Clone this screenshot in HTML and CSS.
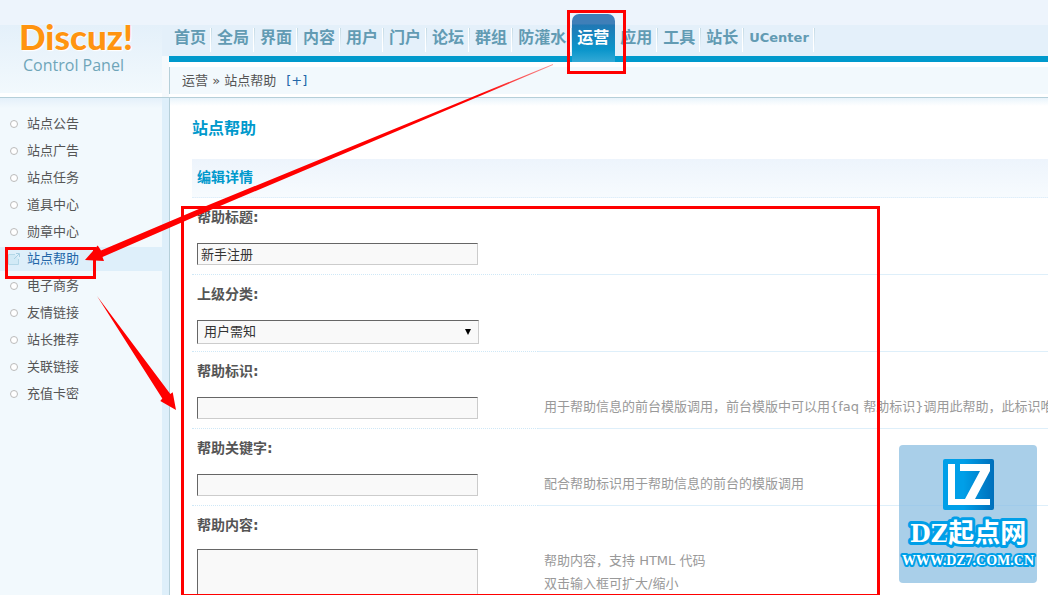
FILE: index.html
```html
<!DOCTYPE html>
<html lang="zh-CN">
<head>
  <meta charset="UTF-8">
  <meta name="viewport" content="width=device-width, initial-scale=1.0">
  <title>Discuz! Control Panel</title>
  <link rel="stylesheet" href="styles.css">
</head>
<body>
  <header class="header">
    <div class="logo">
      <div class="logo-name">Discuz!</div>
      <div class="logo-sub">Control Panel</div>
    </div>
    <div class="header-main">
      <nav class="nav">
        <a href="#">首页</a>
        <a href="#">全局</a>
        <a href="#">界面</a>
        <a href="#">内容</a>
        <a href="#">用户</a>
        <a href="#">门户</a>
        <a href="#">论坛</a>
        <a href="#">群组</a>
        <a href="#">防灌水</a>
        <a href="#" class="active">运营</a>
        <a href="#">应用</a>
        <a href="#">工具</a>
        <a href="#">站长</a>
        <a href="#" class="latin">UCenter</a>
      </nav>
      <div class="crumbs">
        <span>运营 » 站点帮助</span>
        <a href="#">[+]</a>
      </div>
    </div>
  </header>

  <div class="layout">
    <aside class="sidebar">
      <ul class="menu">
        <li><a href="#">站点公告</a></li>
        <li><a href="#">站点广告</a></li>
        <li><a href="#">站点任务</a></li>
        <li><a href="#">道具中心</a></li>
        <li><a href="#">勋章中心</a></li>
        <li class="active">
          <a href="#">
            <svg class="menu-icon" width="12" height="12" viewBox="0 0 12 12">
              <path d="M7 1.5H.5v10h10V6" fill="#d2eaf6" stroke="#b4d8e8"/>
              <path d="M8 .5h3.500V4M11 1L6 6" fill="none" stroke="#a9d0e3"/>
            </svg>站点帮助</a>
        </li>
        <li><a href="#">电子商务</a></li>
        <li><a href="#">友情链接</a></li>
        <li><a href="#">站长推荐</a></li>
        <li><a href="#">关联链接</a></li>
        <li><a href="#">充值卡密</a></li>
      </ul>
    </aside>

    <main class="content">
      <h1>站点帮助</h1>
      <form class="help-form">
        <h2>编辑详情</h2>
        <div class="row">
          <label for="helpTitle">帮助标题:</label>
          <div class="field"><input type="text" id="helpTitle" value="新手注册"></div>
          <p class="tip"></p>
        </div>
        <div class="row">
          <label for="helpParent">上级分类:</label>
          <div class="field select-wrap">
            <select id="helpParent">
              <option>用户需知</option>
            </select>
          </div>
          <p class="tip"></p>
        </div>
        <div class="row">
          <label for="helpId">帮助标识:</label>
          <div class="field"><input type="text" id="helpId"></div>
          <p class="tip">用于帮助信息的前台模版调用，前台模版中可以用{faq 帮助标识}调用此帮助，此标识唯</p>
        </div>
        <div class="row">
          <label for="helpKeyword">帮助关键字:</label>
          <div class="field"><input type="text" id="helpKeyword"></div>
          <p class="tip">配合帮助标识用于帮助信息的前台的模版调用</p>
        </div>
        <div class="row">
          <label for="helpContent">帮助内容:</label>
          <div class="field"><textarea id="helpContent"></textarea></div>
          <p class="tip">帮助内容，支持 HTML 代码<br>双击输入框可扩大/缩小</p>
        </div>
      </form>
    </main>
  </div>

  <!-- site badge -->
  <svg class="badge" width="138" height="138" viewBox="0 0 138 138">
    <defs>
      <linearGradient id="tile">
        <stop offset="0.4" stop-color="#009fe8"/>
        <stop offset="1" stop-color="#006fbb"/>
      </linearGradient>
    </defs>
    <rect width="138" height="138" rx="4" fill="#a9cfe9"/>
    <path d="M0 60.500h138" stroke="#a0cbea"/>
    <rect x="44" y="14" width="51" height="51" rx="2" fill="url(#tile)"/>
    <path d="M49 19h7v35h10l15-28H61v-7h30v7L76 54h15v6H49z" fill="#fff"/>
    <text class="badge-name" x="69" y="97" text-anchor="middle"><tspan class="badge-latin">DZ</tspan>起点网</text>
    <text class="badge-url" x="69" y="120" text-anchor="middle">WWW.DZ7.COM.CN</text>
  </svg>

  <!-- step markers and arrows -->
  <svg class="marks" viewBox="0 0 1048 595">
    <defs>
      <linearGradient id="fade" gradientUnits="userSpaceOnUse" x1="553" y1="64" x2="480" y2="95">
        <stop offset="0" stop-color="#f00" stop-opacity="0.4"/>
        <stop offset="1" stop-color="#f00"/>
      </linearGradient>
    </defs>
    <g fill="none" stroke="#f00" stroke-width="3">
      <rect x="568.5" y="11.5" width="56" height="61"/>
      <rect x="6.5" y="248.5" width="88" height="29"/>
      <rect x="182.500" y="207.500" width="696" height="388"/>
    </g>
    <path d="M553 64L200 208.500 101 250.500 97.700 245.500 85 260 104 261 102.500 257 200 214.500 553 65z" fill="url(#fade)"/>
    <path d="M97 296L170.300 394 172.700 392.300 176 410 160.300 401 162.300 398.500z" fill="#f00"/>
  </svg>
</body>
</html>
```

FILE: styles.css
```css
* {
  box-sizing: border-box;
}

body {
  margin: 0;
  height: 100vh;
  display: flex;
  flex-direction: column;
  overflow: hidden;
  position: relative;
  font: 13px/24px "DejaVu Sans", "Noto Sans CJK SC", sans-serif;
  color: #555;
  background: #fff;
}

a {
  color: inherit;
  text-decoration: none;
}

/* Header */
.header {
  display: grid;
  grid-template-columns: 169px 1fr;
  flex: none;
  border-bottom: 1px solid #b5cfd9;
  background: linear-gradient(#edf4fc 25px, #e4f0fa 25px, #e4f0fa 56px, #f5f9fc 56px);
}

.logo {
  margin-right: 7px;
  padding: 17px 0 0 19px;
  border-bottom: 4px solid #fff;
  background: linear-gradient(#edf4fc 25px, #e4f0fa 25px, #f2f9fd);
}

.logo-name {
  font-family: Lato, sans-serif;
  font-size: 35px;
  line-height: 38px;
  font-weight: 900;
  color: #ff9410;
  text-shadow: 0 0 2px #fff, 1px 1px 1px #fff;
}

.logo-sub {
  padding-left: 4px;
  font-family: "Open Sans", sans-serif;
  font-size: 16px;
  line-height: 20px;
  color: #6fa5b9;
}

.header-main {
  padding-bottom: 3px;
  background: #fff;
}

.nav {
  display: flex;
  align-items: flex-end;
  height: 62px;
  background: linear-gradient(#edf4fc 25px, #e4f0fa 25px);
  box-shadow: inset 0 -6px #09c;
  font-size: 16px;
  font-weight: bold;
  color: #629bb3;
}

.nav a {
  flex: none;
  height: 49px;
  padding: 13px 6px 0 5px;
  background:
    linear-gradient(#fff, #fff) right 1px top 15px / 1px 24px no-repeat,
    linear-gradient(#c5dbe5, #e4f0fa) right 0 top 15px / 1px 20px no-repeat;
}

.nav .latin {
  font-size: 13px;
}

.nav a.active {
  height: 48px;
  padding-top: 12px;
  border-radius: 7px 7px 0 0;
  background: linear-gradient(#3f7fb8 10px, #2078b4 11px, #0b96cb 36px, #33a9d6);
  color: #fff;
}

.crumbs {
  display: flex;
  gap: 10px;
  height: 27px;
  margin-top: 5px;
  padding-left: 12px;
  border-left: 1px solid #b5cfd9;
  background: #f2f9fd;
  line-height: 27px;
}

.crumbs a {
  color: #2366a8;
}

/* Sidebar */
.layout {
  display: grid;
  grid-template-columns: 170px 1fr;
  flex: 1;
  min-height: 0;
  overflow: hidden;
}

.sidebar {
  border-right: 1px solid #b5cfd9;
  background: #deeffa;
}

.menu {
  height: 100%;
  margin: 0 7px 0 0;
  padding: 14px 0 0;
  list-style: none;
  background: linear-gradient(#e4f0fa, #f2f9fd 10px);
}

.menu li {
  margin-bottom: 3px;
}

.menu a {
  display: flex;
  align-items: center;
  padding-left: 10px;
}

.menu a::before {
  content: "";
  box-sizing: border-box;
  width: 8px;
  height: 8px;
  margin-right: 9px;
  border: 1px solid #bbb;
  border-radius: 50%;
  background: #fff;
}

.menu .active {
  background: #deeffa;
  color: #2366a8;
}

.menu .active a {
  padding-left: 8px;
}

.menu .active a::before {
  display: none;
}

.menu-icon {
  margin-right: 7px;
}

/* Content */
.content {
  min-width: 0;
  padding: 19px 0 0 22px;
  background: linear-gradient(#e9f4fb, #fff 8px);
}

h1 {
  margin: 0 0 18px;
  font-size: 16px;
  line-height: 24px;
  color: #09c;
}

h2 {
  height: 39px;
  margin: 0;
  padding-left: 5px;
  border-bottom: 1px dotted #deeffa;
  background: linear-gradient(#edf4fc, #f7fbfe);
  font-size: 14px;
  line-height: 37px;
  color: #09c;
}

.row {
  display: grid;
  grid-template-columns: 346px 1fr;
  grid-template-rows: 43px 1fr;
  min-height: 77px;
}

.row label {
  grid-column: 1 / -1;
  padding: 8px 0 0 5px;
  font-size: 14px;
  line-height: 22px;
  font-weight: bold;
}

.field {
  padding: 2px 0 0 5px;
  border-bottom: 1px dotted #cfe8f7;
}

.field:has(textarea) {
  padding-top: 0;
}

.tip {
  margin: 0;
  padding-left: 6px;
  border-bottom: 1px solid #deeffa;
  line-height: 23px;
  color: #999;
  white-space: nowrap;
  overflow: hidden;
}

input,
select,
textarea {
  display: block;
  width: 281px;
  height: 22px;
  margin: 0;
  padding: 0 3px 2px;
  border: 1px solid;
  border-color: #666 #ccc #ccc #666;
  border-radius: 0;
  background: #f9f9f9;
  font: inherit;
  line-height: 18px;
  color: #333;
}

.select-wrap {
  display: flex;
  align-items: flex-start;
}

.select-wrap::after {
  content: "";
  width: 0;
  margin: 9px 0 0 -14px;
  border: 3px solid transparent;
  border-top: 6px solid #000;
  border-bottom: 0;
  pointer-events: none;
}

select {
  width: 282px;
  height: 24px;
  padding: 0 6px;
  line-height: 22px;
  appearance: none;
}

textarea {
  height: 100px;
  resize: none;
}

/* Overlays */
.badge {
  position: absolute;
  right: 11px;
  bottom: 12px;
}

.badge text {
  fill: #fff;
  stroke: #009fe8;
  stroke-linejoin: round;
  paint-order: stroke;
  font-weight: bold;
}

.badge-name {
  font-family: "Noto Sans CJK SC", sans-serif;
  font-size: 26px;
  stroke-width: 6px;
}

.badge-latin {
  font-family: "DejaVu Serif", serif;
  font-size: 24px;
}

.badge .badge-url {
  font-family: "Liberation Serif", serif;
  font-size: 14px;
  stroke-width: 4px;
}

.marks {
  position: absolute;
  top: 0;
  left: 0;
  width: 100%;
  pointer-events: none;
}
```
